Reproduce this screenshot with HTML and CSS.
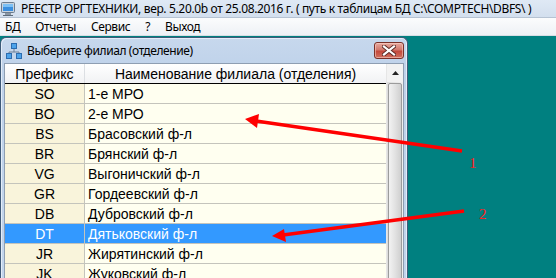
FILE: index.html
```html
<!DOCTYPE html>
<html lang="ru">
<head>
  <meta charset="UTF-8" />
  <title>РЕЕСТР ОРГТЕХНИКИ</title>
  <link rel="stylesheet" href="styles.css">
</head>
<body>
<div class="app">

  <div class="titlebar">
    <svg class="app-icon" width="14" height="14" viewBox="0 0 14 14">
      <rect x="0.5" y="0.5" width="13" height="10" rx="1" fill="#c9d3de" stroke="#6b7c8e"/>
      <rect x="2" y="2" width="10" height="7" fill="#3a8fe0"/>
      <rect x="2" y="2" width="10" height="3" fill="#7cc0f5"/>
      <rect x="4" y="11" width="6" height="2" fill="#8a96a3"/>
      <rect x="2" y="13" width="10" height="1" fill="#5d6b79"/>
    </svg>
    <span class="title-text">РЕЕСТР ОРГТЕХНИКИ, вер. 5.20.0b от 25.08.2016 г. ( путь к таблицам БД C:\COMPTECH\DBFS\ )</span>
  </div>

  <div class="menubar">
    <span class="menu-item">БД</span>
    <span class="menu-item">Отчеты</span>
    <span class="menu-item">Сервис</span>
    <span class="menu-item">?</span>
    <span class="menu-item">Выход</span>
  </div>

  <div class="desk">
    <div class="dialog">
      <div class="dlg-title">
        <svg class="dlg-icon" width="16" height="16" viewBox="0 0 16 16">
          <path d="M8 5v4M3 12V9h10v3" fill="none" stroke="#6a7f96" stroke-width="1"/>
          <rect x="5.5" y="0.5" width="5" height="5" fill="#4da3ea" stroke="#2b6cb0"/>
          <rect x="0.5" y="10.5" width="5" height="5" fill="#4da3ea" stroke="#2b6cb0"/>
          <rect x="10.5" y="10.5" width="5" height="5" fill="#4da3ea" stroke="#2b6cb0"/>
        </svg>
        <span class="dlg-caption">Выберите филиал (отделение)</span>
        <div class="close-btn">
          <svg width="14" height="11" viewBox="0 0 14 11">
            <path d="M2 1.5l10 8M12 1.5l-10 8" stroke="#5a2a25" stroke-width="4" stroke-linecap="square"/>
            <path d="M2 1.5l10 8M12 1.5l-10 8" stroke="#ffffff" stroke-width="2.2" stroke-linecap="square"/>
          </svg>
        </div>
      </div>

      <div class="dlg-body">
        <div class="grid">
          <div class="grid-head">
            <div class="cell c1">Префикс</div>
            <div class="cell c2">Наименование филиала (отделения)</div>
          </div>
          <div class="row"><div class="cell c1">SO</div><div class="cell c2">1-е МРО</div></div>
          <div class="row"><div class="cell c1">BO</div><div class="cell c2">2-е МРО</div></div>
          <div class="row"><div class="cell c1">BS</div><div class="cell c2">Брасовский ф-л</div></div>
          <div class="row"><div class="cell c1">BR</div><div class="cell c2">Брянский ф-л</div></div>
          <div class="row"><div class="cell c1">VG</div><div class="cell c2">Выгоничский ф-л</div></div>
          <div class="row"><div class="cell c1">GR</div><div class="cell c2">Гордеевский ф-л</div></div>
          <div class="row"><div class="cell c1">DB</div><div class="cell c2">Дубровский ф-л</div></div>
          <div class="row selected"><div class="cell c1">DT</div><div class="cell c2">Дятьковский ф-л</div></div>
          <div class="row"><div class="cell c1">JR</div><div class="cell c2">Жирятинский ф-л</div></div>
          <div class="row"><div class="cell c1">JK</div><div class="cell c2">Жуковский ф-л</div></div>
        </div>
        <div class="scrollbar">
          <div class="sb-up">
            <svg width="7" height="4" viewBox="0 0 7 4"><path d="M0 4L3.5 0L7 4z" fill="#222"/></svg>
          </div>
          <div class="sb-thumb"></div>
        </div>
      </div>
    </div>
  </div>

  <!-- пометки поверх скриншота -->
  <svg class="marks" width="556" height="278" viewBox="0 0 556 278">
    <path d="M462 151L256 121" stroke="#ff0000" stroke-width="3.5"/>
    <path d="M245 119L259 114L257 128z" fill="#ff0000"/>
    <path d="M464 211L283 235" stroke="#ff0000" stroke-width="3.5"/>
    <path d="M272 236L284 229L286 242z" fill="#ff0000"/>
    <text x="469" y="168" class="mark-label">1</text>
    <text x="479" y="219" class="mark-label">2</text>
  </svg>

</div>
</body>
</html>
```

FILE: styles.css
```css
* {
  box-sizing: border-box;
}

body {
  margin: 0;
  background: #008080;
}

.app {
  position: relative;
  width: 556px;
  height: 278px;
  overflow: hidden;
  display: flex;
  flex-direction: column;
  font-family: "Noto Sans", "Open Sans", sans-serif;
  color: #000;
}

.titlebar {
  height: 19px;
  display: flex;
  align-items: center;
  gap: 6px;
  padding-left: 1px;
  background: linear-gradient(to bottom, #dfe9f5, #d3dfee);
  border-bottom: 1px solid #b6c3d3;
  font-size: 12px;
  letter-spacing: -0.35px;
  white-space: nowrap;
}

.app-icon {
  flex: none;
}

.menubar {
  height: 20px;
  display: flex;
  align-items: center;
  gap: 15px;
  padding-left: 5px;
  background: linear-gradient(to bottom, #fbfcfd, #eef1f5);
  border-bottom: 1px solid #d8dde4;
  font-size: 12px;
  letter-spacing: -0.4px;
}

.desk {
  flex: 1;
  display: flex;
  padding-top: 1px;
  background: #008080;
}

.dialog {
  width: 408px;
  display: flex;
  flex-direction: column;
  background: linear-gradient(to bottom, #c7d8ed, #bfd2ea 30px, #c2d5ec);
  border: 1px solid #3f5a78;
  border-bottom: none;
  border-radius: 6px 6px 0 0;
  box-shadow: inset 1px 1px 0 #e4edf8, inset -1px 0 0 #e4edf8;
  padding: 0 3px;
}

.dlg-title {
  height: 25px;
  display: flex;
  align-items: center;
  padding-left: 2px;
  font-size: 12px;
  letter-spacing: -0.4px;
}

.dlg-icon {
  flex: none;
  margin-right: 5px;
}

.close-btn {
  margin-left: auto;
  width: 30px;
  height: 17px;
  display: flex;
  align-items: center;
  justify-content: center;
  border: 1px solid #7a3129;
  border-radius: 3px;
  background: linear-gradient(to bottom, #e8a99f, #d2796d 45%, #c4493c 55%, #d0705f);
  box-shadow: inset 0 0 0 1px rgba(255, 220, 210, 0.5);
}

.dlg-body {
  flex: 1;
  display: flex;
  background: #fffff0;
  border: 1px solid #8e9eb2;
  border-bottom: none;
}

.grid {
  width: 382px;
  font-family: "Liberation Sans", Arial, sans-serif;
  font-size: 14px;
}

.grid-head {
  height: 20px;
  display: flex;
  background: linear-gradient(to bottom, #ffffff, #f1f2f4);
  border-bottom: 1px solid #000;
}

.grid-head .c1 {
  background: transparent;
  border-right: 1px solid #dcdfe3;
}

.row {
  height: 20px;
  display: flex;
  border-bottom: 1px solid #c4c4bc;
}

.cell {
  display: flex;
  align-items: center;
  white-space: nowrap;
  overflow: hidden;
}

.c1 {
  width: 80px;
  justify-content: center;
  background: #f9f4db;
  border-right: 1px solid #c4c4bc;
}

.c2 {
  flex: 1;
  padding-left: 3px;
}

.grid-head .c2 {
  justify-content: center;
  padding-left: 0;
}

.row.selected {
  background: #3399ff;
  color: #fff;
}

.row.selected .c1 {
  background: #3399ff;
}

.scrollbar {
  width: 17px;
  display: flex;
  flex-direction: column;
  background: linear-gradient(to right, #dcdcdc, #f0f0f0);
  border-left: 1px solid #e6e6e6;
}

.sb-up {
  height: 18px;
  display: flex;
  align-items: center;
  justify-content: center;
  background: #f2f2f2;
}

.sb-thumb {
  flex: 1;
  margin: 1px 1px 0;
  border: 1px solid #9c9c9c;
  border-radius: 2px 2px 0 0;
  background: linear-gradient(to right, #f2f2f2, #e2e2e2 50%, #cfcfcf);
}

.marks {
  position: absolute;
  left: 0;
  top: 0;
  pointer-events: none;
}

.mark-label {
  font-family: "Liberation Serif", serif;
  font-size: 15px;
  fill: #ff2020;
}
```
